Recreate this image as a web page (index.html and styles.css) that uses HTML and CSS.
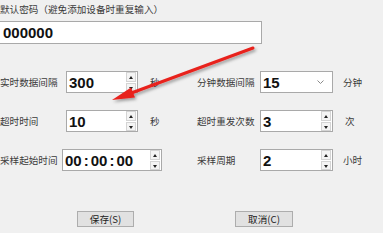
FILE: index.html
```html
<!DOCTYPE html>
<html lang="zh-CN">
<head>
    <meta charset="UTF-8">
    <title>参数设置</title>
    <link rel="stylesheet" href="styles.css">
</head>
<body>
<div class="dialog">
    <div class="pwd-label">默认密码（避免添加设备时重复输入）</div>
    <div class="pwd-box">000000</div>

    <div class="grid">
        <div class="field left">
            <span class="lbl">实时数据间隔</span>
            <div class="box spin"><span class="val">300</span><span class="btns"><i class="up"></i><i class="dn"></i></span></div>
            <span class="unit">秒</span>
        </div>
        <div class="field right">
            <span class="lbl">分钟数据间隔</span>
            <div class="box combo"><span class="val">15</span>
                <svg class="chev" width="7" height="4" viewBox="0 0 7 4"><polyline points="0.5,0.5 3.5,3.5 6.5,0.5" fill="none" stroke="#8a8a8a" stroke-width="1"/></svg>
            </div>
            <span class="unit">分钟</span>
        </div>

        <div class="field left">
            <span class="lbl">超时时间</span>
            <div class="box spin"><span class="val">10</span><span class="btns"><i class="up"></i><i class="dn"></i></span></div>
            <span class="unit">秒</span>
        </div>
        <div class="field right">
            <span class="lbl">超时重发次数</span>
            <div class="box spin"><span class="val">3</span><span class="btns"><i class="up"></i><i class="dn"></i></span></div>
            <span class="unit unit-c">次</span>
        </div>

        <div class="field left">
            <span class="lbl lbl-s">采样起始时间</span>
            <div class="box spin wide"><span class="val">00<b>:</b>00<b>:</b>00</span><span class="btns"><i class="up"></i><i class="dn"></i></span></div>
        </div>
        <div class="field right">
            <span class="lbl">采样周期</span>
            <div class="box spin"><span class="val">2</span><span class="btns"><i class="up"></i><i class="dn"></i></span></div>
            <span class="unit">小时</span>
        </div>
    </div>

    <div class="actions">
        <button class="btn btn-save">保存(S)</button>
        <button class="btn btn-cancel">取消(C)</button>
    </div>

    <!-- 标注箭头 -->
    <svg class="arrow" width="383" height="233" viewBox="0 0 383 233">
        <defs>
            <filter id="sh" x="-20%" y="-20%" width="140%" height="160%">
                <feDropShadow dx="1.5" dy="2" stdDeviation="1.5" flood-color="#000" flood-opacity="0.35"/>
            </filter>
        </defs>
        <g filter="url(#sh)">
            <line x1="253" y1="48" x2="130" y2="93.5" stroke="#e8221e" stroke-width="3" stroke-linecap="round"/>
            <polygon points="112,100 131,87.5 135,97.5" fill="#e8221e"/>
        </g>
    </svg>
</div>
</body>
</html>
```

FILE: styles.css
```css
/* 对话框样式 */
body {
    margin: 0;
    padding: 0;
    background-color: #f0f0f0;
    font-family: "Noto Sans CJK SC", sans-serif;
    font-size: 9.6px;
    color: #3a3a3a;
}
.dialog {
    position: relative;
    width: 383px;
    height: 233px;
    overflow: hidden;
}
.pwd-label {
    height: 19px;
    line-height: 18px;
}
.pwd-box {
    margin-top: 2px;
    margin-left: -1px;
    width: 258px;
    height: 21px;
    background: #fff;
    border: 1px solid #a9a9a9;
    font-family: "Liberation Sans", Arial, sans-serif;
    font-weight: bold;
    font-size: 15px;
    line-height: 21px;
    color: #111;
    padding-left: 3px;
    box-sizing: content-box;
}
.grid {
    margin-top: 27px;
    display: grid;
    grid-template-columns: 197px 1fr;
    row-gap: 17px;
}
.field {
    display: flex;
    align-items: center;
    height: 22px;
}
.left .lbl {
    width: 66px;
}
.left .lbl-s {
    width: 62px;
}
.right .lbl {
    width: 63px;
}
.box {
    position: relative;
    box-sizing: border-box;
    height: 22px;
    background: #fff;
    border: 1px solid #a9a9a9;
    display: flex;
    align-items: center;
    font-family: "Liberation Sans", Arial, sans-serif;
    font-weight: bold;
    font-size: 15px;
    color: #111;
}
.left .box {
    width: 72px;
}
.left .box.wide {
    width: 100px;
}
.right .box {
    width: 73px;
}
.val {
    flex: 1;
    padding-left: 2px;
}
.val b {
    margin: 0 2px;
}
.btns {
    display: flex;
    flex-direction: column;
    width: 10px;
    height: 20px;
    margin-right: 1px;
    gap: 1px;
}
.btns i {
    flex: 1;
    background: #f4f4f4;
    border: 1px solid #d4d4d4;
    position: relative;
}
.btns i::after {
    content: "";
    position: absolute;
    left: 2px;
    top: 3px;
    border-left: 2.5px solid transparent;
    border-right: 2.5px solid transparent;
}
.btns .up::after {
    border-bottom: 3px solid #222;
}
.btns .dn::after {
    top: 3px;
    border-top: 3px solid #222;
}
.chev {
    margin-right: 8px;
}
.unit {
    margin-left: 12px;
}
.right .unit {
    margin-left: 10px;
}
.right .unit-c {
    margin-left: 12px;
}
.actions {
    display: flex;
    margin-top: 40px;
    padding-left: 77px;
}
.btn {
    box-sizing: border-box;
    width: 57px;
    height: 16px;
    padding: 0;
    background: #e1e1e1;
    border: 1px solid #adadad;
    font-family: "Noto Sans CJK SC", sans-serif;
    font-size: 9.6px;
    line-height: 13px;
    color: #222;
}
.btn-cancel {
    margin-left: 101px;
    width: 58px;
}
.arrow {
    position: absolute;
    left: 0;
    top: 0;
    pointer-events: none;
}
```
